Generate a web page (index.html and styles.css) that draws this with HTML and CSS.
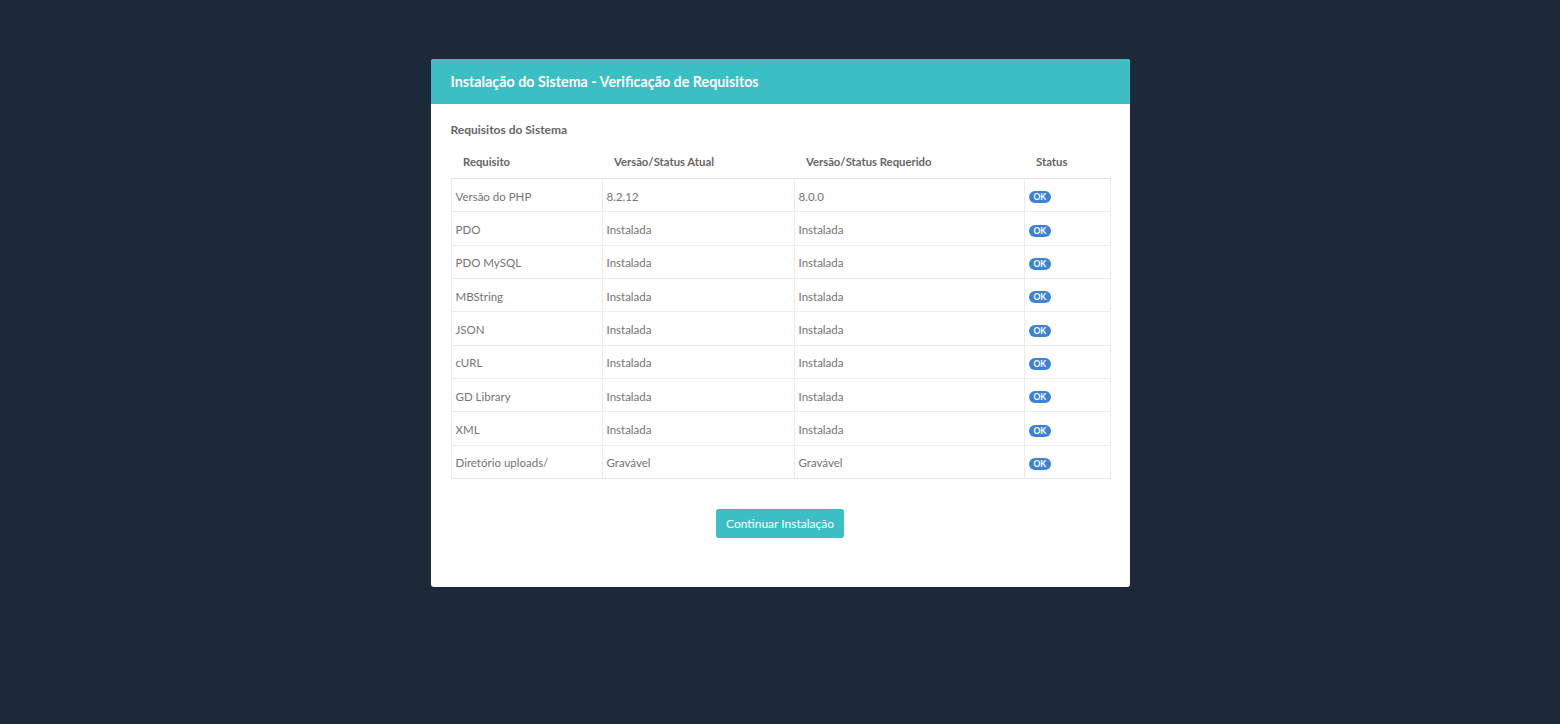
FILE: index.html
```html
<!DOCTYPE html>
<html lang="pt-BR">
<head>
  <meta charset="utf-8">
  <title>Instalação do Sistema</title>
  <link rel="stylesheet" href="styles.css">
</head>
<body>
  <div class="card">
    <div class="card-header">Instalação do Sistema - Verificação de Requisitos</div>
    <div class="card-body">
      <h2 class="section-title">Requisitos do Sistema</h2>
      <table class="req-table">
        <colgroup>
          <col class="col-req">
          <col class="col-atual">
          <col class="col-requerido">
          <col class="col-status">
        </colgroup>
        <thead>
          <tr>
            <th>Requisito</th>
            <th>Versão/Status Atual</th>
            <th>Versão/Status Requerido</th>
            <th>Status</th>
          </tr>
        </thead>
        <tbody>
          <tr><td>Versão do PHP</td><td>8.2.12</td><td>8.0.0</td><td><span class="badge">OK</span></td></tr>
          <tr><td>PDO</td><td>Instalada</td><td>Instalada</td><td><span class="badge">OK</span></td></tr>
          <tr><td>PDO MySQL</td><td>Instalada</td><td>Instalada</td><td><span class="badge">OK</span></td></tr>
          <tr><td>MBString</td><td>Instalada</td><td>Instalada</td><td><span class="badge">OK</span></td></tr>
          <tr><td>JSON</td><td>Instalada</td><td>Instalada</td><td><span class="badge">OK</span></td></tr>
          <tr><td>cURL</td><td>Instalada</td><td>Instalada</td><td><span class="badge">OK</span></td></tr>
          <tr><td>GD Library</td><td>Instalada</td><td>Instalada</td><td><span class="badge">OK</span></td></tr>
          <tr><td>XML</td><td>Instalada</td><td>Instalada</td><td><span class="badge">OK</span></td></tr>
          <tr><td>Diretório uploads/</td><td>Gravável</td><td>Gravável</td><td><span class="badge">OK</span></td></tr>
        </tbody>
      </table>
      <div class="actions">
        <button type="button" class="btn-continue">Continuar Instalação</button>
      </div>
    </div>
  </div>
</body>
</html>
```

FILE: styles.css
```css
body {
  background-color: #1d2939;
  font-family: 'Lato', 'Open Sans', sans-serif;
  margin: 0;
  padding: 59px 0 0;
  height: 100vh;
  box-sizing: border-box;
}
.card {
  width: 699px;
  margin: 0 auto;
  background-color: #fff;
  border-radius: 3px;
  overflow: hidden;
}
.card-header {
  background-color: #3cbec5;
  color: #fff;
  font-size: 14.3px;
  font-weight: bold;
  height: 45px;
  line-height: 45px;
  padding: 0 20px;
}
.card-body {
  padding: 19px 20px 49px;
}
.section-title {
  font-size: 12px;
  font-weight: bold;
  color: #666;
  margin: 0 0 8px;
  line-height: 14px;
}
.req-table {
  width: 659px;
  border-collapse: collapse;
  table-layout: fixed;
  font-size: 11.5px;
  color: #757575;
}
.col-req { width: 151px; }
.col-atual { width: 192px; }
.col-requerido { width: 230px; }
.col-status { width: 86px; }
.req-table th {
  text-align: left;
  font-weight: bold;
  font-size: 11.3px;
  color: #666;
  padding: 0 12px;
  height: 33px;
  border-bottom: 1px solid #e2e2e2;
}
.req-table td {
  padding: 2px 4px 0;
  height: 30.33px;
  border: 1px solid #ececec;
  border-top: none;
}
.badge {
  display: inline-block;
  background-color: #3c82d9;
  color: #fff;
  font-size: 8.5px;
  font-weight: bold;
  line-height: 12px;
  padding: 0 5px;
  border-radius: 6px;
  vertical-align: middle;
}
.actions {
  display: flex;
  justify-content: center;
  margin-top: 30px;
}
.btn-continue {
  background-color: #3cbec5;
  color: #fff;
  border: none;
  border-radius: 3px;
  font-family: inherit;
  font-size: 12px;
  width: 128px;
  height: 29px;
  padding: 0;
  cursor: pointer;
}
```
